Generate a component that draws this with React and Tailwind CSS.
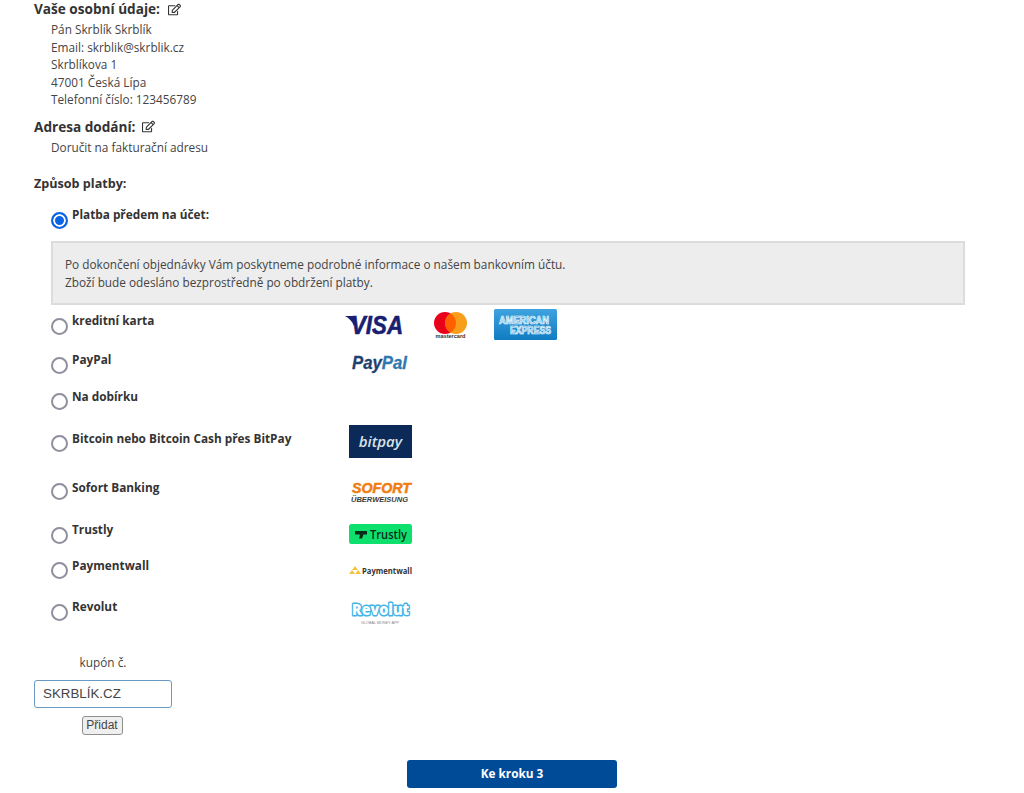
import React from 'react';
import { FaRegEdit } from 'react-icons/fa';

const SANS = 'font-["Open_Sans","Liberation_Sans",sans-serif]';
const RADIO = 'm-0 h-[17px] w-[17px] shrink-0 appearance-none rounded-full border-2 border-[#8f8f9d] bg-white checked:border-[#0b63e5] checked:bg-[#0b63e5] checked:shadow-[inset_0_0_0_2px_#fff]';

const VisaLogo = () => (
  <svg width="64" height="24" viewBox="0 0 64 24" className="overflow-visible">
    <path d="M0 1h8l3 7-2 3C7 6 4 3 0 1z" fill="#1a1f71" />
    <text x="6" y="19" fontFamily="Liberation Sans, sans-serif" fontSize="25" fontWeight="700" fontStyle="italic" fill="#1a1f71" stroke="#1a1f71" strokeWidth="0.6" textLength="52" lengthAdjust="spacingAndGlyphs">VISA</text>
  </svg>
);

const MastercardLogo = () => (
  <svg width="33" height="27" viewBox="0 0 33 27">
    <circle cx="11" cy="11" r="11" fill="#eb001b" />
    <circle cx="22" cy="11" r="11" fill="#f79e1b" />
    <path d="M16.5 1.5a11 11 0 0 1 0 19a11 11 0 0 1 0-19z" fill="#ff5f00" />
    <text x="16.5" y="26" textAnchor="middle" fontFamily="Liberation Sans, sans-serif" fontSize="6" fontWeight="700" fill="#333" textLength="30" lengthAdjust="spacingAndGlyphs">mastercard</text>
  </svg>
);

const AmexLogo = () => (
  <svg width="63" height="31" viewBox="0 0 63 31">
    <defs>
      <linearGradient id="amexBg" x1="0" y1="0" x2="0" y2="1">
        <stop offset="0" stopColor="#3fa3df" />
        <stop offset="1" stopColor="#0f7cc2" />
      </linearGradient>
    </defs>
    <rect width="63" height="31" rx="1.5" fill="url(#amexBg)" />
    <text x="5" y="15" fontFamily="Liberation Sans, sans-serif" fontSize="10" fontWeight="700" fill="#5db4e6" stroke="#f2fafe" strokeWidth="0.7" textLength="50" lengthAdjust="spacingAndGlyphs">AMERICAN</text>
    <text x="16" y="25" fontFamily="Liberation Sans, sans-serif" fontSize="10" fontWeight="700" fill="#5db4e6" stroke="#f2fafe" strokeWidth="0.7" textLength="41" lengthAdjust="spacingAndGlyphs">EXPRESS</text>
  </svg>
);

const PaypalLogo = () => (
  <svg width="62" height="24" viewBox="0 -4 62 24" className="overflow-visible">
    <text x="0" y="13" fontFamily="Liberation Sans, sans-serif" fontSize="18" fontWeight="700" fontStyle="italic" strokeWidth="0.3" stroke="#21406f" textLength="55" lengthAdjust="spacingAndGlyphs">
      <tspan fill="#21406f">Pay</tspan>
      <tspan fill="#2f78b0" stroke="#2f78b0">Pal</tspan>
    </text>
  </svg>
);

const BitpayLogo = () => (
  <div className='flex h-[33px] w-[63px] items-center justify-center bg-[#0b2a58] font-["Open_Sans",sans-serif] text-[15px] font-semibold italic leading-none text-[#d9e2ea]'>
    bitpay
  </div>
);

const SofortLogo = () => (
  <svg width="64" height="25" viewBox="0 -4 64 25" className="overflow-visible">
    <text x="1" y="11" fontFamily="Liberation Sans, sans-serif" fontSize="14" fontWeight="700" fontStyle="italic" fill="#f07d10" stroke="#f07d10" strokeWidth="0.5" textLength="59" lengthAdjust="spacingAndGlyphs">SOFORT</text>
    <text x="0" y="19.500" fontFamily="Liberation Sans, sans-serif" fontSize="7.5" fontWeight="700" fontStyle="italic" fill="#3a3a3a" textLength="57" lengthAdjust="spacingAndGlyphs">ÜBERWEISUNG</text>
  </svg>
);

const TrustlyLogo = () => (
  <svg width="63" height="20" viewBox="0 0 63 20">
    <rect width="63" height="20" rx="2.5" fill="#0ee06e" />
    <path d="M6 7h12v3.500h-3.500l-1.500 4h-3l1-4H6z" fill="#0b2b1a" />
    <text x="21" y="15" fontFamily="Open Sans, sans-serif" fontSize="12" fontWeight="600" fill="#0b2b1a" textLength="37" lengthAdjust="spacingAndGlyphs">Trustly</text>
  </svg>
);

const PaymentwallLogo = () => (
  <svg width="63" height="14" viewBox="0 -2 63 14" className="overflow-visible">
    <path d="M0 8l3-4 3 4zM3 4l3-4 3 4zM6 8l3-4 3 4z" fill="#f5c33b" />
    <text x="13" y="8" fontFamily="Open Sans, sans-serif" fontSize="8.500" fontWeight="700" fill="#333" textLength="50" lengthAdjust="spacingAndGlyphs">Paymentwall</text>
  </svg>
);

const RevolutLogo = () => (
  <svg width="60" height="29" viewBox="0 -4 60 29" className="overflow-visible">
    <text x="1" y="15" fontFamily="Open Sans, sans-serif" fontSize="16" fontWeight="800" fill="#fff" stroke="#43b4e6" strokeWidth="3" strokeLinejoin="round" paintOrder="stroke" textLength="57" lengthAdjust="spacingAndGlyphs">Revolut</text>
    <text x="10" y="23.500" fontFamily="Liberation Sans, sans-serif" fontSize="3.500" fill="#888" textLength="38" lengthAdjust="spacingAndGlyphs">GLOBAL MONEY APP</text>
  </svg>
);

// row heights and logo offsets follow the screenshot, every row is a bit different
const payments = [
  { name: 'kreditní karta', rowClass: 'h-[39px]', radioClass: 'mt-[7px]', logoClass: 'ml-[-4px] mt-[-2px] items-start gap-[30px]', logos: [<div className="mt-[6px] w-[59px]" key="v"><VisaLogo /></div>, <div className="mt-[3px]" key="m"><MastercardLogo /></div>, <div className="ml-[-3px]" key="a"><AmexLogo /></div>] },
  { name: 'PayPal', rowClass: 'h-[37px]', radioClass: 'mt-[7px]', logoClass: 'ml-[3px] mt-[2px]', logos: [<PaypalLogo key="p" />] },
  { name: 'Na dobírku', rowClass: 'h-[42px]', radioClass: 'mt-[6px]', logoClass: '', logos: [] },
  { name: 'Bitcoin nebo Bitcoin Cash přes BitPay', rowClass: 'h-[49px]', radioClass: 'mt-[6px]', logoClass: 'mt-[-4px]', logos: [<BitpayLogo key="b" />] },
  { name: 'Sofort Banking', rowClass: 'h-[42px]', radioClass: 'mt-[5px]', logoClass: 'ml-[2px]', logos: [<SofortLogo key="s" />] },
  { name: 'Trustly', rowClass: 'h-[36px]', radioClass: 'mt-[7px]', logoClass: 'mt-[4px]', logos: [<TrustlyLogo key="t" />] },
  { name: 'Paymentwall', rowClass: 'h-[41px]', radioClass: 'mt-[6px]', logoClass: 'mt-[8px]', logos: [<PaymentwallLogo key="pw" />] },
  { name: 'Revolut', rowClass: 'h-[45px]', radioClass: 'mt-[7px]', logoClass: 'ml-[2px] mt-[-1px]', logos: [<RevolutLogo key="r" />] },
];

const App = () => {
  return (
    <div className={`${SANS} h-[793px] overflow-hidden bg-white pl-[34px] pr-[59px] text-[11.8px] leading-[17.6px] text-[#444]`}>
      <h3 className="flex h-[18px] items-center text-[13.6px] font-bold leading-none text-[#333]">
        Vaše osobní údaje:
        <FaRegEdit className="ml-[8px] text-[13px] text-[#333]" />
      </h3>
      <div className="ml-[17px] mt-[3px]">
        <div>Pán Skrblík Skrblík</div>
        <div>Email: skrblik@skrblik.cz</div>
        <div>Skrblíkova 1</div>
        <div>47001 Česká Lípa</div>
        <div>Telefonní číslo: 123456789</div>
      </div>
      <h3 className="mt-[9px] flex h-[18px] items-center text-[13.6px] font-bold leading-none text-[#333]">
        Adresa dodání:
        <FaRegEdit className="ml-[7px] text-[13px] text-[#333]" />
      </h3>
      <div className="ml-[17px] mt-[3px]">Doručit na fakturační adresu</div>
      <div className="mt-[18px] text-[12.6px] font-bold text-[#333]">Způsob platby:</div>

      <div className="mt-[14px] flex h-[35px] pl-[17px]">
        <input type="radio" name="pay" defaultChecked className={`${RADIO} mt-[6px]`} />
        <label className="ml-[4px] font-bold text-[#333]">Platba předem na účet:</label>
      </div>
      <div className="ml-[17px] h-[64px] border-2 border-[#dcdcdc] bg-[#ededed] pl-[12px] pt-[13px]">
        <p>Po dokončení objednávky Vám poskytneme podrobné informace o našem bankovním účtu.</p>
        <p>Zboží bude odesláno bezprostředně po obdržení platby.</p>
      </div>

      <div className="mt-[6px]">
        {payments.map((p) => (
          <div key={p.name} className={`flex pl-[17px] ${p.rowClass}`}>
            <input type="radio" name="pay" className={`${RADIO} ${p.radioClass}`} />
            <label className="ml-[4px] w-[277px] shrink-0 pt-[1px] font-bold text-[#333]">{p.name}</label>
            <div className={`flex ${p.logoClass}`}>{p.logos}</div>
          </div>
        ))}
      </div>

      <div className="mt-[12px] w-[138px] text-center">
        <div>kupón č.</div>
        <input
          type="text"
          defaultValue="SKRBLÍK.CZ"
          className='mt-[8px] h-[28px] w-[138px] rounded-[3px] border border-[#6b9ac4] px-[8px] font-["Liberation_Sans",sans-serif] text-[13.33px] text-[#444]'
        />
        <button className='ml-[-2px] mt-[8px] h-[19px] w-[41px] rounded-[3px] border border-[#8f8f8f] bg-[#efefef] font-["Liberation_Sans",sans-serif] text-[12px] leading-none text-[#444]'>
          Přidat
        </button>
      </div>

      <div className="ml-[-34px] mr-[-59px] mt-[25px] flex justify-center">
        <button className="h-[28px] w-[210px] rounded-[3px] bg-[#004b98] text-[11.8px] font-bold text-white">
          Ke kroku 3
        </button>
      </div>
    </div>
  );
};

export default App;
